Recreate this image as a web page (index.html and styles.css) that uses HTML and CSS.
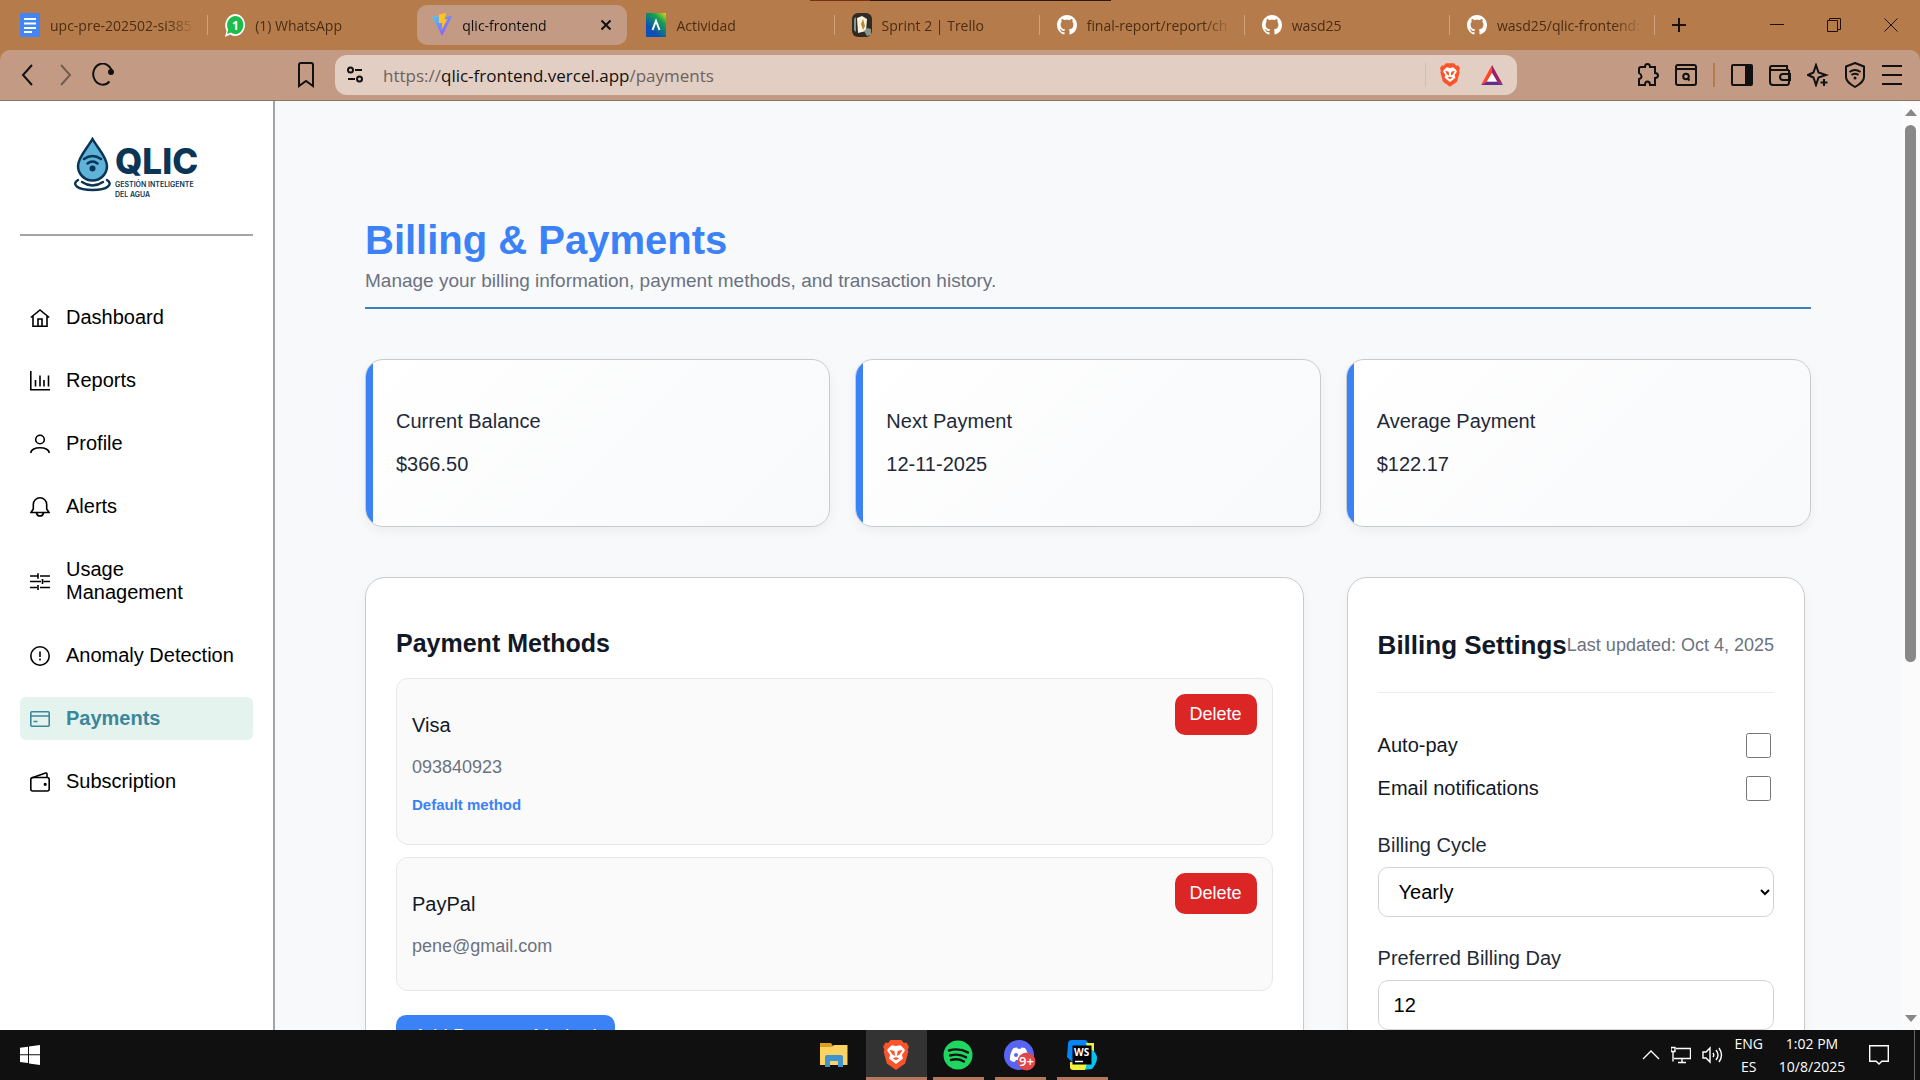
FILE: index.html
```html
<!DOCTYPE html>
<html lang="en">
<head>
<meta charset="utf-8">
<title>qlic-frontend</title>
<link rel="stylesheet" href="styles.css">
</head>
<body>
<svg class="defs" aria-hidden="true">
  <symbol id="github" viewBox="0 0 16 16"><path fill="#fff" d="M8 0C3.58 0 0 3.58 0 8c0 3.54 2.29 6.53 5.47 7.59.4.07.55-.17.55-.38 0-.19-.01-.82-.01-1.49-2.01.37-2.53-.49-2.69-.94-.09-.23-.48-.94-.82-1.13-.28-.15-.68-.52-.01-.53.63-.01 1.08.58 1.23.82.72 1.21 1.87.87 2.33.66.07-.52.28-.87.51-1.07-1.78-.2-3.64-.89-3.64-3.95 0-.87.31-1.59.82-2.15-.08-.2-.36-1.02.08-2.12 0 0 .67-.21 2.2.82.64-.18 1.32-.27 2-.27s1.36.09 2 .27c1.53-1.04 2.2-.82 2.2-.82.44 1.1.16 1.92.08 2.12.51.56.82 1.27.82 2.15 0 3.07-1.87 3.75-3.65 3.95.29.25.54.73.54 1.48 0 1.07-.01 1.93-.01 2.2 0 .21.15.46.55.38A8 8 0 0 0 16 8c0-4.42-3.58-8-8-8z"/></symbol>
  <symbol id="brave" viewBox="0 0 24 28"><path fill="#fb542b" d="M7 0h10l2.500 2.800 2.200-.4L24 6l-1 3 .5 2-3 11L12 28 3.500 22 .5 11 1 9 0 6l2.300-3.600 2.200.4z"/><path fill="#fff" d="M12 5.500 8 4.800 4.200 8.500 3.800 10l2.700 4-1 3.300 3.700 3L12 22.500l2.800-2.200 3.700-3-1-3.300 2.700-4-.4-1.500L16 4.800z"/><path fill="#fb542b" d="m6 9 4.500 1.200L11 15l-2.500-1.500zM18 9l-4.500 1.200L13 15l2.500-1.500zM9 17l3-1 3 1-3 2z"/></symbol>
</svg>

<header class="browser">
  <div class="tabs">
    <div class="tab">
      <svg width="20" height="24" viewBox="0 0 20 24"><rect width="20" height="24" rx="2" fill="#4285f4"/><path d="M4 6h12M4 10.500h12M4 15h12M4 19h8" stroke="#fff" stroke-width="2"/></svg>
      <span class="tab-title">upc-pre-202502-si385</span>
    </div>
    <div class="tab no-sep">
      <svg width="20" height="24" viewBox="0 0 20 24"><path d="M10 1a10 11 0 1 1-5 20.500L0 24l1.500-6A10.500 11.500 0 0 1 10 1z" fill="#fff"/><path d="M10 3a8 9 0 1 1-4 16.500L2 21l1.200-4.200A8.500 9.200 0 0 1 10 3z" fill="#1dbd4b"/><text x="7" y="17" class="wa-count">1</text></svg>
      <span class="tab-title">(1) WhatsApp</span>
    </div>
    <div class="tab active">
      <svg width="20" height="24" viewBox="0 0 20 24"><defs><linearGradient id="v" x1="0" y1="0" x2="1" y2="1"><stop stop-color="#41d1ff"/><stop offset="1" stop-color="#b034fe"/></linearGradient></defs><path d="M0 3l10 1.500L20 3 10 23z" fill="url(#v)"/><path d="M7 1.500 14 0l-1.500 6.500 3-.5-6 11 .8-7H6.800z" fill="#ffc41f"/></svg>
      <span class="tab-title">qlic-frontend</span>
      <button class="tab-close" aria-label="Close tab"><svg width="12" height="12" viewBox="0 0 12 12"><path d="M1.500 1.500l9 9m0-9l-9 9" stroke="#111" stroke-width="2"/></svg></button>
    </div>
    <div class="tab">
      <svg width="20" height="24" viewBox="0 0 20 24"><defs><linearGradient id="a" x1="1" y1="0" x2=".4" y2=".8"><stop stop-color="#e5d51a"/><stop offset=".4" stop-color="#16a34d"/><stop offset="1" stop-color="#0b50b8"/></linearGradient></defs><rect width="20" height="24" fill="url(#a)"/><path d="M6.500 17 10 8l3.500 9" fill="none" stroke="#fff" stroke-width="2"/></svg>
      <span class="tab-title">Actividad</span>
    </div>
    <div class="tab">
      <svg width="20" height="24" viewBox="0 0 20 24"><rect width="20" height="24" rx="6" fill="#302c25"/><path d="M5 5l5-2 5 3-1 12-8 2z" fill="#f7f3df"/><path d="M9 11l2-5 2 7-2 4z" fill="#b88a32"/><path d="M2 6l2-2v15l-2-2zM12 18l3-3 4 1v6l-4 1z" fill="#8a948f"/></svg>
      <span class="tab-title">Sprint 2 | Trello</span>
    </div>
    <div class="tab"><svg width="20" height="24"><use href="#github"/></svg><span class="tab-title">final-report/report/ch</span></div>
    <div class="tab"><svg width="20" height="24"><use href="#github"/></svg><span class="tab-title">wasd25</span></div>
    <div class="tab"><svg width="20" height="24"><use href="#github"/></svg><span class="tab-title">wasd25/qlic-frontend:</span></div>
    <div class="window-tools">
      <button class="new-tab" aria-label="New tab"><svg width="16" height="16" viewBox="0 0 16 16"><path d="M8 1v14M1 8h14" stroke="#1a1208" stroke-width="2"/></svg></button>
      <button class="win" aria-label="Minimize"><svg width="14" height="14" viewBox="0 0 14 14"><path d="M0 6.500h14" stroke="#1a1208"/></svg></button>
      <button class="win" aria-label="Restore"><svg width="14" height="14" viewBox="0 0 14 14"><path d="M.5 2.500h10v11H.5zM2.500 2.500v-2h11v11h-3" fill="none" stroke="#1a1208"/></svg></button>
      <button class="win" aria-label="Close"><svg width="14" height="14" viewBox="0 0 14 14"><path d="M.5.5l13 13m0-13l-13 13" stroke="#1a1208"/></svg></button>
    </div>
  </div>

  <div class="toolbar">
    <div class="nav-buttons">
      <button aria-label="Back"><svg width="20" height="24" viewBox="0 0 20 24"><path d="M14 2 5 12l9 10" class="ln"/></svg></button>
      <button aria-label="Forward" class="dim"><svg width="20" height="24" viewBox="0 0 20 24"><path d="M6 2l9 10-9 10" class="ln"/></svg></button>
      <button aria-label="Reload"><svg width="22" height="24" viewBox="0 0 22 24"><path d="M17.500 18.500A9.500 10.500 0 1 1 20 9" class="ln"/><circle cx="19" cy="9" r="3" fill="#111"/></svg></button>
    </div>
    <button class="bookmark" aria-label="Bookmark"><svg width="18" height="26" viewBox="0 0 18 26"><path d="M2 3q0-2 2-2h10q2 0 2 2v21l-7-5-7 5z" class="ln"/></svg></button>
    <div class="address">
      <svg width="16" height="18" viewBox="0 0 16 18"><g class="ln"><circle cx="3.500" cy="4" r="2.500"/><path d="M8 4h7M1 13h7"/><circle cx="12.500" cy="13" r="2.500"/></g></svg>
      <span class="url">https://<b>qlic-frontend.vercel.app</b>/payments</span>
      <span class="address-sep"></span>
      <svg width="20" height="24"><use href="#brave"/></svg>
      <svg width="22" height="20" viewBox="0 0 22 20"><path d="M11 0 0 20l6-3.500L11 8z" fill="#ff4724"/><path d="M11 0l11 20-6-3.500L11 8z" fill="#9e1f63"/><path d="M0 20h22l-6-3.500H6z" fill="#662d91"/><path d="M11 8l5 8.500H6z" fill="#fff"/></svg>
    </div>
    <div class="extensions">
      <button aria-label="Extensions"><svg width="22" height="24" viewBox="0 0 22 24"><path class="ln" d="M4 4h4q0-3 2.500-3T13 4h5v6q3 .3 3 2.500T18 15v7h-5q0-3.500-2.500-3.500T8 22H2v-6q2.500-.5 2.500-2.500T2 10V6q0-2 2-2z"/></svg></button>
      <button aria-label="Search tabs"><svg width="22" height="24" viewBox="0 0 22 24"><rect x="1" y="2" width="20" height="20" rx="2" class="ln"/><path d="M1 6h20M12.500 15.500l2 2" class="ln"/><circle cx="11" cy="13.500" r="2.800" class="ln"/></svg></button>
      <span class="tool-sep"></span>
      <button aria-label="Sidebar"><svg width="22" height="24" viewBox="0 0 22 24"><rect x="1" y="2" width="20" height="20" rx="1" class="ln"/><path d="M14 2h7v20h-7z" fill="#111"/></svg></button>
      <button aria-label="Wallet"><svg width="22" height="24" viewBox="0 0 22 24"><path class="ln" d="M20 7H3q-2 0-2-2t2-2h15v4M1 5v14q0 3 3 3h14q2 0 2-3V7M21 11h-7q-3 0-3 3t3 3h7z"/></svg></button>
      <button aria-label="Leo"><svg width="22" height="24" viewBox="0 0 22 24"><path class="ln" d="M9 2l2.500 7.500L19 12l-7.500 2.500L9 22l-2.500-7.500L1 12l5.500-2.500zM17 16v7M13.500 19.500h7"/></svg></button>
      <button aria-label="VPN"><svg width="20" height="26" viewBox="0 0 20 26"><path class="ln" d="M10 1l9 3.500V15q0 5-9 10Q1 20 1 15V4.500zM4.500 10q5.500-4 11 0M6.500 13q3.500-2.500 7 0"/><circle cx="10" cy="16" r="1.500" fill="#111"/></svg></button>
      <button aria-label="Menu"><svg width="22" height="24" viewBox="0 0 22 24"><path d="M1 3h20M1 12h20M1 21h20" class="ln"/></svg></button>
    </div>
  </div>
</header>

<div class="app">
  <aside class="sidebar">
    <div class="brand">
      <svg width="124" height="62" viewBox="0 0 124 62" role="img" aria-label="QLIC">
        <path d="M19.500 2C14.500 11 5 20 5 29a14.500 14.500 0 0 0 29 0C34 20 24.500 11 19.500 2z" fill="#5fb3d9" stroke="#0a3556" stroke-width="2.500"/>
        <g fill="none" stroke="#0a3556" stroke-width="2.500" stroke-linecap="round"><path d="M11 22q8.500-6 17 0M14.500 26.500q5-4 10 0"/><path d="M5 43c-7 4-1 10 14.500 10s21-6 14.500-10"/><path d="M9 45q10.500 7 21 0"/></g>
        <circle cx="19.500" cy="31.500" r="3" fill="#0a3556"/>
        <text x="42" y="37" class="logo-name">QLIC</text>
        <text x="42" y="50" class="logo-sub">GESTIÓN INTELIGENTE</text>
        <text x="42" y="60" class="logo-sub">DEL AGUA</text>
      </svg>
    </div>
    <nav class="menu">
      <a href="#"><svg width="20" height="20" viewBox="0 0 20 20"><path d="M.8 9.500 10 2l9.200 7.500M3 8v10.200h14V8M8 18v-7h4v7"/></svg>Dashboard</a>
      <a href="#"><svg width="20" height="20" viewBox="0 0 20 20"><path d="M.8 0v18.700H20M5.500 15.500V9M10 15.500V4.500M14 15.500V9M18.500 15.500V4.500"/></svg>Reports</a>
      <a href="#"><svg width="20" height="20" viewBox="0 0 20 20"><circle cx="10" cy="5.500" r="4.300"/><path d="M.8 19c.2-7 18.200-7 18.400 0"/></svg>Profile</a>
      <a href="#"><svg width="20" height="20" viewBox="0 0 20 20"><path d="M1 15.500h18l-2.300-3.500V7.500a6.700 6.700 0 0 0-13.400 0V12zM6.500 16q.5 3 3.500 3t3.500-3"/></svg>Alerts</a>
      <a href="#"><svg width="20" height="20" viewBox="0 0 20 20"><path d="M0 5h8M10 5h10M8 2.300v5.400M0 10.500h11M13.500 10.500H20M12.500 8v5M0 16.500h7M10 16.500h10M8 14v5"/></svg>Usage<br>Management</a>
      <a href="#"><svg width="20" height="20" viewBox="0 0 20 20"><circle cx="10" cy="10" r="9.200"/><path d="M10 5.500v5.500M10 12.500v2"/></svg>Anomaly Detection</a>
      <a href="#" class="current"><svg width="20" height="20" viewBox="0 0 20 20"><rect x=".8" y="2.800" width="18.400" height="14.400" rx="1"/><path d="M1 7h18M3.500 12.500h4"/></svg>Payments</a>
      <a href="#"><svg width="20" height="20" viewBox="0 0 20 20"><rect x=".8" y="5.500" width="18.400" height="13.500" rx="2"/><path d="M1.500 6 15.500 1q1.500-.3 1.500 1.200V5.500"/><circle cx="15.200" cy="12.300" r=".8"/></svg>Subscription</a>
    </nav>
  </aside>

  <main class="page">
    <header class="page-head">
      <h1>Billing &amp; Payments</h1>
      <p>Manage your billing information, payment methods, and transaction history.</p>
    </header>

    <section class="stats">
      <article class="stat"><p>Current Balance</p><p>$366.50</p></article>
      <article class="stat"><p>Next Payment</p><p>12-11-2025</p></article>
      <article class="stat"><p>Average Payment</p><p>$122.17</p></article>
    </section>

    <div class="panels">
      <section class="panel">
        <h2>Payment Methods</h2>
        <div class="method">
          <div class="method-info"><p class="method-name">Visa</p><p class="method-id">093840923</p><p class="method-default">Default method</p></div>
          <button class="delete">Delete</button>
        </div>
        <div class="method">
          <div class="method-info"><p class="method-name">PayPal</p><p class="method-id">pene@gmail.com</p></div>
          <button class="delete">Delete</button>
        </div>
        <button class="add">Add Payment Method</button>
      </section>

      <section class="panel">
        <div class="settings-head"><h2>Billing Settings</h2><span>Last updated: Oct 4, 2025</span></div>
        <div class="toggle"><label for="autopay">Auto-pay</label><input type="checkbox" id="autopay"></div>
        <div class="toggle"><label for="notify">Email notifications</label><input type="checkbox" id="notify"></div>
        <div class="field"><label for="cycle">Billing Cycle</label>
          <select id="cycle"><option>Yearly</option><option>Monthly</option></select></div>
        <div class="field"><label for="day">Preferred Billing Day</label>
          <input type="number" id="day" value="12"></div>
      </section>
    </div>
  </main>

  <div class="scrollbar" aria-hidden="true">
    <svg width="12" height="8" viewBox="0 0 12 8"><path d="M6 0l6 7H0z" fill="#888"/></svg>
    <div class="track"><div class="thumb"></div></div>
    <svg width="12" height="8" viewBox="0 0 12 8"><path d="M0 1h12L6 8z" fill="#888"/></svg>
  </div>
</div>

<footer class="taskbar">
  <button class="start" aria-label="Start"><svg width="20" height="20" viewBox="0 0 20 20"><path d="M0 2.800 8 1.700v7.600H0zM9 1.500 20 0v9.300H9zM0 10.300h8v7.800l-8-1.100zM9 10.300h11V20L9 18.400z" fill="#fff"/></svg></button>
  <div class="apps">
    <button aria-label="File Explorer"><svg width="28" height="24" viewBox="0 0 28 24"><path d="M0 0h11l2 3v4H0z" fill="#d9a01f"/><path d="M0 4h12l2-2h13.500v20H0z" fill="#fcd363"/><path d="M5 24V14q0-2 2-2h14q2 0 2 2v10h-5v-6h-8v6z" fill="#4093cf"/></svg></button>
    <button class="open focused" aria-label="Brave"><svg width="26" height="30"><use href="#brave"/></svg></button>
    <button class="open" aria-label="Spotify"><svg width="30" height="30" viewBox="0 0 30 30"><circle cx="15" cy="15" r="14.500" fill="#1ed760"/><path d="M6 10.500q10-3 19 2M7 15.500q9-2.500 16 1.800M8 20q7-2 13 1.500" fill="none" stroke="#101010" stroke-width="2.400" stroke-linecap="round"/></svg></button>
    <button class="open" aria-label="Discord"><svg width="32" height="32" viewBox="0 0 32 32"><circle cx="15" cy="16" r="15" fill="#5865f2"/><path d="M9.500 9 13 8.500l.8 1.300h3L17.500 8.500 21 9q4 5.500 3.500 12-2 2-4.500 2l-1.500-2h-6.500l-1.500 2q-2.500 0-4.500-2Q5.500 14.500 9.500 9z" fill="#fff"/><circle cx="12" cy="16" r="2" fill="#5865f2"/><circle cx="22.500" cy="22.500" r="9" fill="#e0484c"/><text x="22.500" y="27" text-anchor="middle" class="badge">9+</text></svg></button>
    <button class="open" aria-label="WebStorm"><svg width="30" height="30" viewBox="0 0 30 30"><path d="M1 4q0-4 4-4h12q4 0 4 4v18H5L0 17z" fill="#0785f5"/><path d="M19 3h8v10l-6-3z" fill="#e8f044"/><path d="M24 9q6 4 6 9t-5 11l-10 1 5-8z" fill="#07c3f2"/><path d="M3 22l17 1-2 7H6q-3 0-3-3z" fill="#f3f13a"/><rect x="5.500" y="5.500" width="19" height="19"/><text x="7" y="15.500" class="ws">WS</text><path d="M8 21.500h8" stroke="#fff" stroke-width="1.500"/></svg></button>
  </div>
  <div class="tray">
    <svg width="18" height="20" viewBox="0 0 18 20"><path d="M1 14l8-8 8 8" class="tr"/></svg>
    <svg width="20" height="20" viewBox="0 0 20 20"><path d="M5 3.500h14.500v10H3M0 2.500h4v4H0zM2 6.500v10M7 17.500h8M11 13.500v4" class="tr"/></svg>
    <svg width="22" height="20" viewBox="0 0 22 20"><path d="M1 7h3l4-4v14l-4-4H1zM11 8q1.500 2 0 4M14 5q4 5 0 10M17 3q5 7 0 14" class="tr"/></svg>
    <div class="lang">ENG<br>ES</div>
    <div class="clock">1:02 PM<br>10/8/2025</div>
    <svg width="20" height="20" viewBox="0 0 20 20"><path d="M.7.7h18.600v15.600h-6.500L10 19l-2.800-2.700H.7z" class="tr"/></svg>
  </div>
</footer>
</body>
</html>
```
FILE: styles.css
```css
* { box-sizing: border-box; }
body {
  margin: 0;
  height: 100vh;
  display: flex;
  flex-direction: column;
  overflow: hidden;
  background: #fff;
  font: 20px/23px "Liberation Sans", Arial, sans-serif;
  color: #000;
}
h1, h2, p { margin: 0; }
button { font: inherit; border: 0; padding: 0; background: none; }
svg { display: block; flex: none; }
.defs { position: absolute; width: 0; height: 0; }

/* Browser chrome */
.browser {
  flex: none;
  background: #b67b4a;
  font-family: "Open Sans", "Noto Sans", sans-serif;
}
.tabs {
  display: flex;
  height: 50px;
  padding-left: 3px;
  background: linear-gradient(to right, #7a3213 20%, #2e180c 20%) 50% 0 / 301px 1px no-repeat;
}
.tab {
  flex: 1 1 0;
  min-width: 0;
  display: flex;
  align-items: center;
  gap: 10px;
  padding: 0 8px 0 17px;
  font-size: 14px;
  color: #4a2d14;
  background: linear-gradient(#d3a17e, #d3a17e) right center / 1px 20px no-repeat;
}
.tab.no-sep { background: none; }
.tab-title {
  flex: 1;
  overflow: hidden;
  white-space: nowrap;
  mask-image: linear-gradient(to right, #000 calc(100% - 34px), transparent calc(100% - 4px));
}
.tab.active {
  background: #c39b84;
  color: #111;
  border-radius: 10px;
  margin: 5px 2px 5px 4px;
  padding: 0 15px;
}
.wa-count { font: bold 12px "Open Sans", sans-serif; fill: #fff; }
.window-tools { flex: none; width: 265px; display: flex; align-items: center; }
.new-tab { width: 48px; margin-right: 45px; }
.window-tools button { display: grid; place-items: center; height: 50px; }
.win { width: 57px; }

.toolbar {
  display: flex;
  align-items: center;
  height: 51px;
  padding: 0 17px 0 18px;
  background: #c39b84;
  border-bottom: 1px solid #8f7264;
  border-radius: 10px 10px 0 0;
}
.ln { fill: none; stroke: #111; stroke-width: 2; }
.nav-buttons { display: flex; gap: 17px; }
.dim { opacity: .45; }
.bookmark { margin-left: 183px; }
.address {
  flex: 1;
  display: flex;
  align-items: center;
  height: 40px;
  margin: 0 120px 0 20px;
  padding: 0 14px 0 12px;
  background: #e2cec3;
  border-radius: 12px;
}
.url { flex: 1; margin-left: 20px; font-size: 17px; color: #6e625c; white-space: nowrap; }
.url b { font-weight: 400; color: #111; }
.address-sep { width: 1px; height: 24px; margin-right: 14px; background: #cdbdb8; }
.address svg + svg { margin-left: 21px; }
.extensions { display: flex; align-items: center; gap: 16px; }
.tool-sep { width: 2px; height: 24px; background: #b67b4a; }

/* App frame */
.app { flex: 1; min-height: 0; display: flex; background: #f8f9fb; }
.sidebar {
  flex: none;
  width: 275px;
  padding: 0 20px;
  background: #fff;
  border-right: 2px solid #a0a4a8;
  overflow: hidden;
}
.brand { padding: 36px 0 35px 53px; border-bottom: 2px solid #a3a5aa; }
.logo-name { font: 800 35px "Inter", sans-serif; fill: #0a3556; }
.logo-sub { font: 600 7px "Inter", sans-serif; fill: #0a3556; }
.menu { display: flex; flex-direction: column; gap: 20px; margin-top: 60px; }
.menu a {
  display: grid;
  grid-template-columns: 20px 1fr;
  column-gap: 16px;
  align-items: center;
  padding: 10px;
  border-radius: 6px;
  color: #000;
  text-decoration: none;
}
.menu svg { fill: none; stroke: currentColor; stroke-width: 1.600; }
.menu a.current { background: #e4f3ee; color: #3b879b; font-weight: 700; }

.page { flex: 1; min-width: 0; padding: 116px 90px 0; overflow: hidden; }
.page-head { padding-bottom: 15px; border-bottom: 2px solid #3b82b6; }
.page-head h1 { font-size: 40px; line-height: 46px; color: #3b82f6; }
.page-head p { margin-top: 6px; font-size: 19px; line-height: 23px; color: #6b7280; }

.stats { display: grid; grid-template-columns: repeat(3, 1fr); gap: 25px; margin: 50px 0; }
.stat {
  position: relative;
  overflow: hidden;
  display: flex;
  flex-direction: column;
  gap: 20px;
  padding: 50px 30px;
  border: 1px solid #c9cbcf;
  border-radius: 18px;
  background: linear-gradient(135deg, #fff, #f8f9fb);
  box-shadow: 0 4px 12px rgba(0, 0, 0, .05);
  color: #1f2937;
}
.stat::before {
  content: "";
  position: absolute;
  inset: 0 auto 0 0;
  width: 7px;
  background: #3b82f6;
}

.panels { display: grid; grid-template-columns: 939fr 458fr; gap: 43px; padding-right: 6px; }
.panel {
  padding: 50px 30px;
  background: #fff;
  border: 1px solid #c9cbcf;
  border-radius: 20px;
  box-shadow: 0 4px 12px rgba(0, 0, 0, .04);
}
.panel h2 { font-size: 25px; line-height: 30px; color: #111827; }
.method {
  display: flex;
  justify-content: space-between;
  align-items: flex-start;
  margin-bottom: 12px;
  padding: 15px;
  border: 1px solid #e5e7eb;
  border-radius: 12px;
  background: #fafafa;
}
.panel h2 + .method { margin-top: 20px; }
.method-info { display: flex; flex-direction: column; gap: 20px; padding: 20px 0 18px; color: #111827; }
.method-info .method-id { font-size: 18px; line-height: 21px; color: #6b7280; }
.method-info .method-default { font-size: 15px; line-height: 13px; font-weight: 700; color: #3b82f6; }
.delete {
  height: 41px;
  padding: 0 15px;
  border-radius: 10px;
  background: #dc2626;
  color: #fff;
  font-size: 18px;
}
.add {
  height: 41px;
  margin-top: 12px;
  padding: 0 18px;
  border-radius: 10px;
  background: #3b82f6;
  color: #fff;
  font-size: 19px;
}

.settings-head {
  display: flex;
  justify-content: space-between;
  align-items: center;
  padding: 2px 0 32px;
  margin-bottom: 40px;
  border-bottom: 1px solid #ececee;
  white-space: nowrap;
}
.settings-head h2 { font-size: 26px; }
.settings-head span { font-size: 18px; color: #6b7280; }
.toggle {
  display: flex;
  justify-content: space-between;
  align-items: center;
  margin-bottom: 18px;
  color: #111827;
}
.toggle input { width: 25px; height: 25px; margin: 0 3px 0 0; }
.field { display: flex; flex-direction: column; gap: 10px; margin-top: 30px; color: #1f2937; }
.toggle + .field { margin-top: 33px; }
.field select, .field input {
  width: 100%;
  height: 50px;
  padding: 0 15px;
  border: 1px solid #d1d5db;
  border-radius: 10px;
  background: #fff;
  color: #000;
  font: 20px "Liberation Sans", Arial, sans-serif;
}
.field select { padding: 0 2px 0 16px; }
.field input { appearance: textfield; }

.scrollbar {
  flex: none;
  width: 19px;
  display: flex;
  flex-direction: column;
  align-items: center;
  gap: 8px;
  padding: 8px 0;
  background: #fbfbfc;
}
.track { flex: 1; width: 11px; }
.thumb { height: 61%; border-radius: 6px; background: #888; }

/* Taskbar */
.taskbar {
  flex: none;
  display: grid;
  grid-template-columns: 1fr auto 1fr;
  height: 50px;
  background: #101010;
  color: #fff;
}
.start { justify-self: start; width: 60px; display: grid; place-items: center; }
.apps { display: flex; gap: 11px; padding-right: 4px; }
.apps button { width: 51px; display: grid; place-items: center; }
.apps .open { border-bottom: 3px solid #b5775c; padding-top: 3px; }
.apps .focused { width: 61px; margin: 0 -5px; background: #333; }
.badge { font: 600 13px "Open Sans", sans-serif; fill: #fff; }
.ws { font: bold 10px "Open Sans", sans-serif; fill: #fff; }
.tray {
  justify-self: end;
  display: flex;
  align-items: center;
  margin-right: 5px;
  padding-right: 25px;
  gap: 11px;
  border-right: 1px solid #666;
  font: 14px/23px "Open Sans", "Noto Sans", sans-serif;
  text-align: center;
}
.tr { fill: none; stroke: #fff; stroke-width: 1.400; }
.clock { width: 76px; margin-right: 8px; }
```
